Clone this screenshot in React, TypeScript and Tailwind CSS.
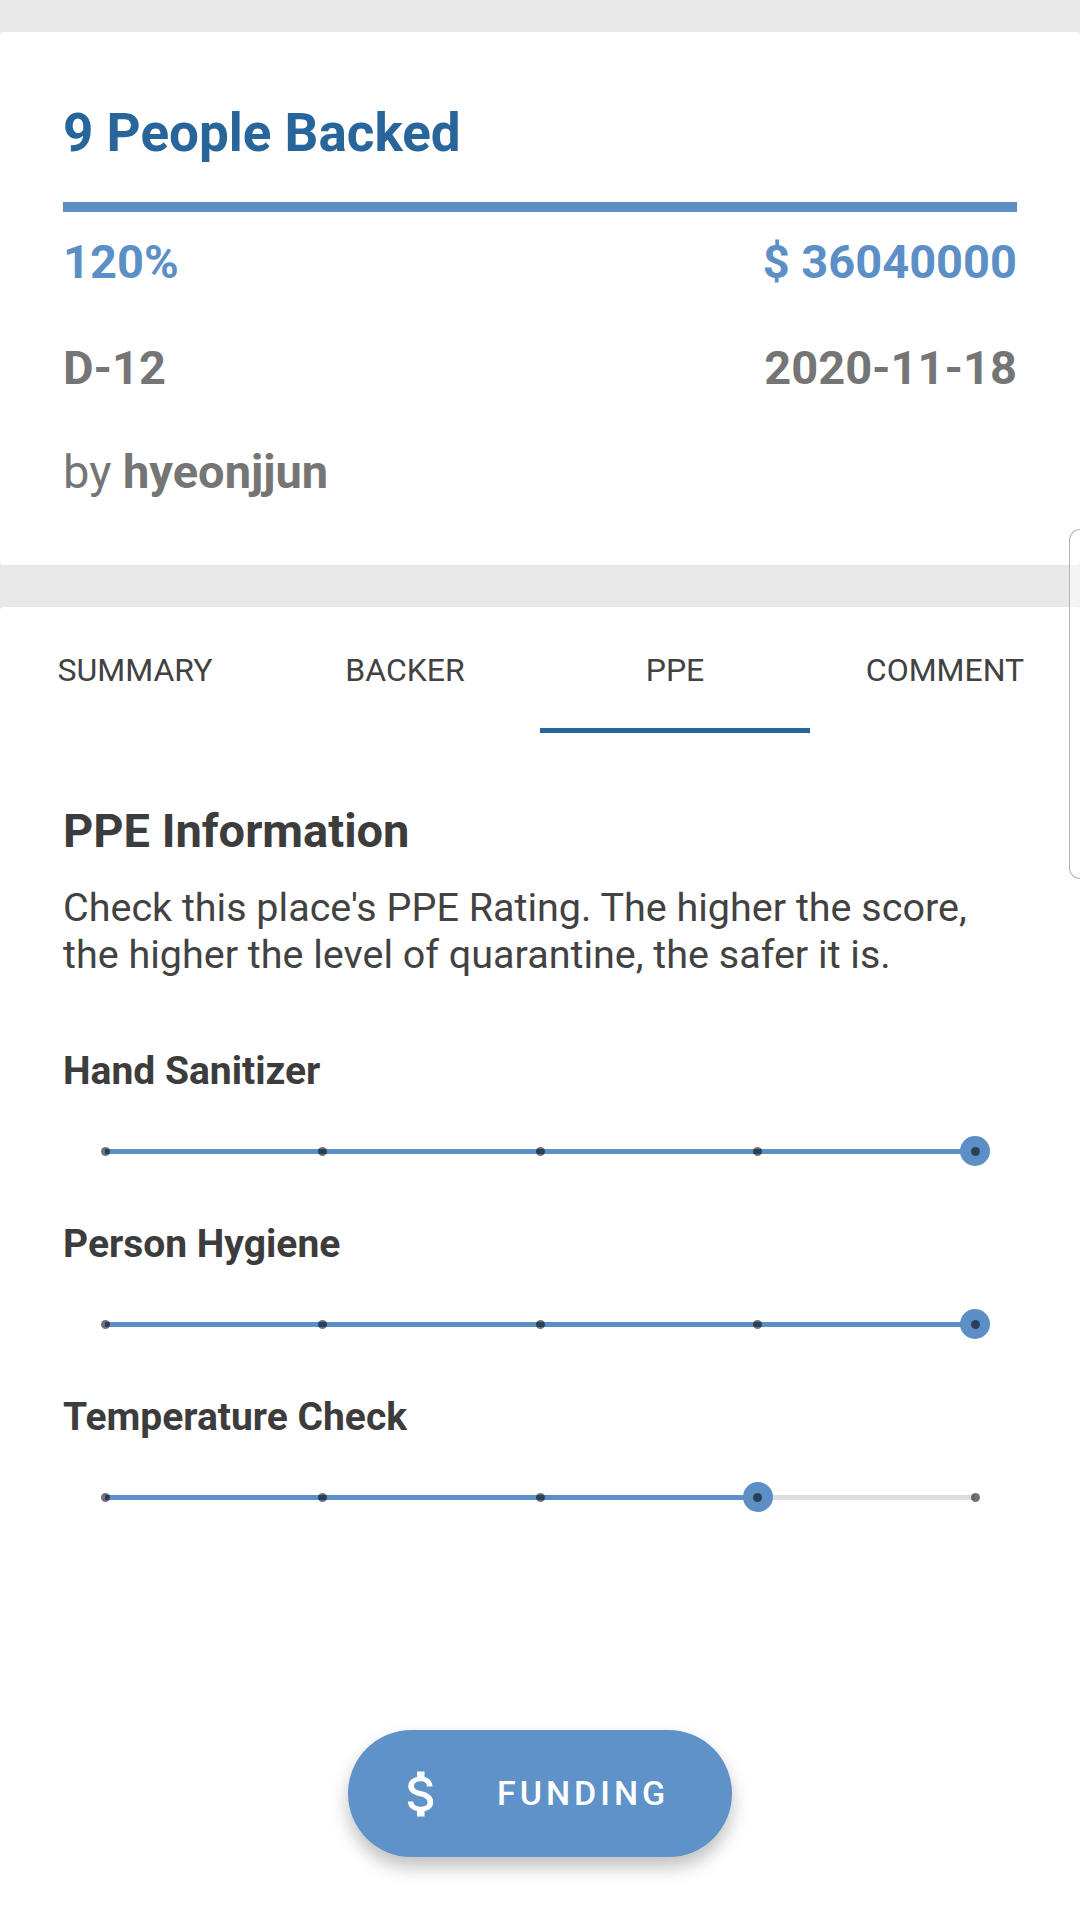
import React from 'react';

const font = { fontFamily: 'Roboto, "Noto Sans", sans-serif' };

interface RatingProps {
  label: string;
  value: number; // 1..5
}

const ticks = [0, 1, 2, 3, 4];

const Rating: React.FC<RatingProps> = ({ label, value }) => {
  const pct = ((value - 1) / 4) * 100;
  return (
    <div className="mt-[44px] first:mt-[74px]">
      <h3 className="text-[39px] leading-none font-bold text-[#3c3c3c]">{label}</h3>
      <div className="mt-[30px] h-[60px] flex items-center pl-[42px] pr-[42px]">
        <div className="relative w-full h-[5px] bg-[#dcdcdc]">
          <div className="absolute left-0 top-0 h-full bg-[#5b8fc6]" style={{ width: `${pct}%` }} />
          <div
            className="absolute top-1/2 w-[30px] h-[30px] -ml-[15px] -mt-[15px] rounded-full bg-[#5b8fc6]"
            style={{ left: `${pct}%` }}
          />
          {ticks.map((t) => (
            <div
              key={t}
              className="absolute top-1/2 w-[9px] h-[9px] -ml-[4.5px] -mt-[4.5px] rounded-full bg-black/55"
              style={{ left: `${t * 25}%` }}
            />
          ))}
        </div>
      </div>
    </div>
  );
};

const tabs = ['SUMMARY', 'BACKER', 'PPE', 'COMMENT'];

export default function App() {
  return (
    <div className="relative h-[1920px] w-[1080px] bg-[#e8e8e8] pt-[32px] flex flex-col overflow-hidden" style={font}>
      {/* funding summary card */}
      <div className="bg-white rounded-[4px] px-[63px] pt-[75px] pb-[70px]">
        <h1 className="text-[53px] leading-none font-bold text-[#28659b]">9 People Backed</h1>
        <div className="mt-[42px] h-[10px] bg-[#5b8fc6]" />
        <div className="mt-[26px] flex justify-between text-[47px] leading-none font-bold text-[#5b8fc6]">
          <span>120%</span>
          <span>$ 36040000</span>
        </div>
        <div className="mt-[59px] flex justify-between text-[47px] leading-none font-bold text-[#757575]">
          <span>D-12</span>
          <span>2020-11-18</span>
        </div>
        <div className="mt-[57px] text-[47px] leading-none text-[#757575]">
          by <span className="font-bold">hyeonjjun</span>
        </div>
      </div>

      {/* tabs + content */}
      <div className="mt-[42px] flex-1 bg-white rounded-t-[4px] flex flex-col">
        <div className="grid grid-cols-4 h-[126px]">
          {tabs.map((t) => (
            <div key={t} className="relative flex items-center justify-center text-[32px] text-[#424242]">
              {t}
              {t === 'PPE' && <div className="absolute left-0 right-0 bottom-0 h-[5px] bg-[#29649a]" />}
            </div>
          ))}
        </div>

        <div className="px-[63px]">
          <h2 className="mt-[74px] text-[47px] leading-none font-bold text-[#3c3c3c]">PPE Information</h2>
          <p className="mt-[31px] text-[39.5px] leading-[46.5px] text-[#424242] whitespace-nowrap">
            Check this place's PPE Rating. The higher the score,
            <br />
            the higher the level of quarantine, the safer it is.
          </p>
          <div>
            <Rating label="Hand Sanitizer" value={5} />
            <Rating label="Person Hygiene" value={5} />
            <Rating label="Temperature Check" value={4} />
          </div>
        </div>

        <div className="mt-auto pb-[63px] flex justify-center">
          <button className="w-[384px] h-[127px] rounded-full bg-[#5e92c8] shadow-[0_10px_18px_rgba(0,0,0,0.25)] flex items-center pl-[44px] text-white">
            <svg width="60" height="60" viewBox="0 0 24 24" fill="currentColor">
              <path d="M11.8 10.9c-2.27-.59-3-1.2-3-2.15 0-1.09 1.01-1.85 2.7-1.850 1.78 0 2.44.85 2.5 2.1h2.21c-.07-1.72-1.12-3.3-3.21-3.81V3h-3v2.16c-1.94.42-3.5 1.68-3.5 3.61 0 2.31 1.91 3.46 4.7 4.13 2.5.6 3 1.48 3 2.41 0 .69-.49 1.790-2.7 1.79-2.06 0-2.87-.92-2.98-2.1h-2.2c.12 2.19 1.76 3.42 3.68 3.83V21h3v-2.15c1.95-.37 3.5-1.5 3.5-3.55 0-2.84-2.43-3.81-4.7-4.4z" />
            </svg>
            <span className="ml-[45px] text-[34px] font-medium tracking-[4px]">FUNDING</span>
          </button>
        </div>
      </div>

      {/* edge panel handle */}
      <div className="absolute right-0 top-[529px] w-[11px] h-[350px] rounded-l-[12px] border border-r-0 border-[#b4b4b4] bg-white/50" />
    </div>
  );
}
